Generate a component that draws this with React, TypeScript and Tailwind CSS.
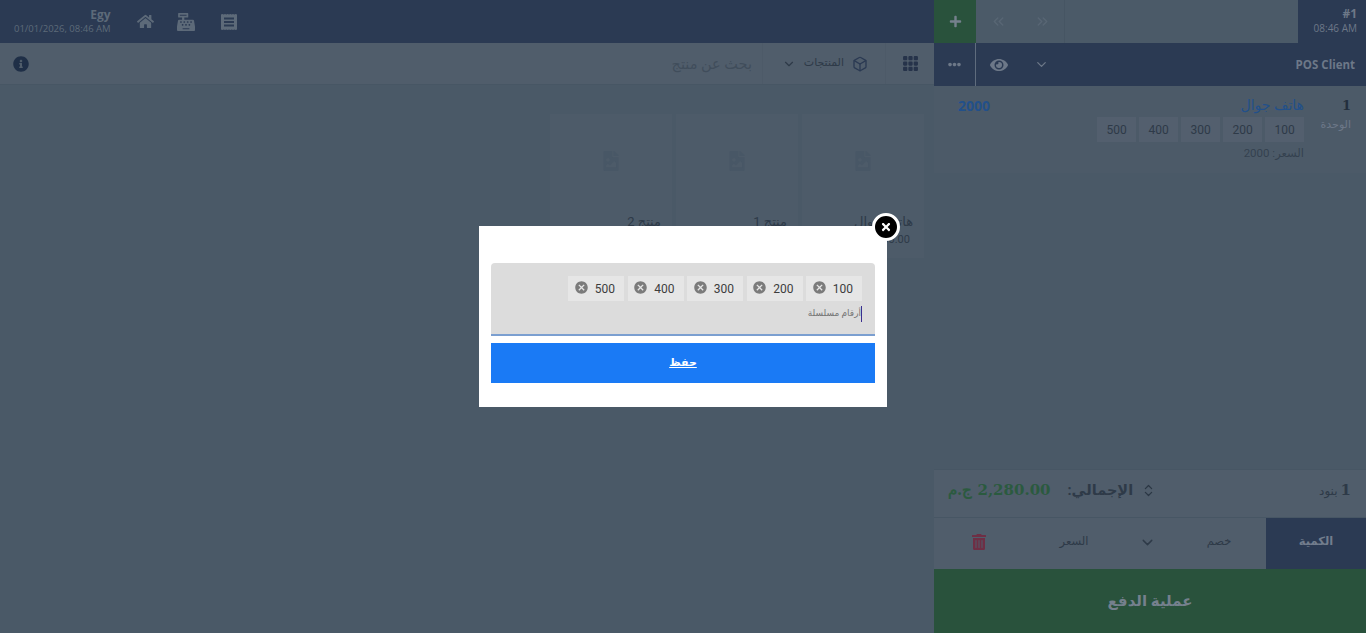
import { FaCashRegister, FaEllipsisH, FaEye, FaFileImage, FaHome, FaInfoCircle, FaPlus, FaTimes, FaTrashAlt } from 'react-icons/fa';
import { BsGrid3X3GapFill } from 'react-icons/bs';
import { FiBox, FiChevronDown } from 'react-icons/fi';
import { LuChevronsLeft, LuChevronsRight, LuChevronsUpDown } from 'react-icons/lu';
import { MdCancel } from 'react-icons/md';

const serials = ['100', '200', '300', '400', '500'];
const products = [
  { name: 'هاتف جوال', price: '2,000.00' },
  { name: 'منتج 1', price: '' },
  { name: 'منتج 2', price: '' },
];

function ReceiptIcon() {
  return (
    <svg width="16" height="16" viewBox="0 0 16 16" fill="currentColor">
      <path d="M0 0.5 L1.3 0 L2.7 0.5 L4 0 L5.3 0.5 L6.7 0 L8 0.5 L9.3 0 L10.7 0.5 L12 0 L13.3 0.5 L14.7 0 L16 0.5 V15.5 L14.7 16 L13.3 15.5 L12 16 L10.7 15.5 L9.3 16 L8 15.5 L6.7 16 L5.3 15.5 L4 16 L2.7 15.5 L1.3 16 L0 15.5 Z" />
      <path fill="#2b3a53" d="M3 3.5 H13 V5.5 H3 Z M3 7 H13 V9 H3 Z M3 10.5 H13 V12.5 H3 Z" />
    </svg>
  );
}

function ProductCard({ name, price }: { name: string; price: string }) {
  return (
    <div className="flex h-[144px] w-[122px] flex-col bg-[#4d5b69] pr-[11px]">
      <div className="flex h-[93px] items-center justify-center pl-[11px] text-[#485766]">
        <FaFileImage size={20} />
      </div>
      <p className="mt-[7px] text-[13px] leading-4 text-[#2e3a48]">{name}</p>
      <p className="mt-[2px] pr-[3px] text-[11px] leading-4 text-[#2e3a48]">{price}</p>
    </div>
  );
}

function Chip({ value }: { value: string }) {
  return (
    <div className="flex h-[25px] w-[56px] items-center gap-[6px] bg-[#e6e6e6] pr-[9px] text-[12px] text-[#3d3d3d]">
      <span>{value}</span>
      <MdCancel size={15} className="-mt-0.5 text-[#7b7b7b]" />
    </div>
  );
}

export default function App() {
  return (
    <div
      dir="rtl"
      className="relative flex h-[633px] w-[1366px] overflow-hidden bg-[#4a5967] font-['Roboto','DejaVu_Sans',sans-serif]"
    >
      {/* السلة */}
      <aside className="flex w-[432px] shrink-0 flex-col">
        <div className="flex h-[43px] shrink-0 bg-[#4b5a68]">
          <div className="flex w-[68px] flex-col items-start justify-start bg-[#2b3a53] pt-[7px] pr-[9px] text-[#6d7888]">
            <span dir="ltr" className="font-['Open_Sans',sans-serif] text-[12px] leading-[14px] font-bold">#1</span>
            <span dir="ltr" className="font-['Open_Sans',sans-serif] text-[10px] leading-[14px]">08:46 AM</span>
          </div>
          <div className="flex-1 border-l border-[#465563]" />
          <div className="flex w-[44px] items-center justify-center text-[#586674]">
            <LuChevronsRight size={17} />
          </div>
          <div className="flex w-[44px] items-center justify-center text-[#586674]">
            <LuChevronsLeft size={17} />
          </div>
          <div className="flex w-[42px] items-center justify-center bg-[#29523c] text-[#75808d]">
            <FaPlus size={13} />
          </div>
        </div>

        <div className="flex h-[43px] shrink-0 items-center bg-[#2b3a53] text-[#6d7888]">
          <span dir="ltr" className="flex-1 pr-[11px] text-right font-['Open_Sans',sans-serif] text-[11.5px] font-bold">
            POS Client
          </span>
          <div className="flex w-[38px] items-center justify-center">
            <FiChevronDown size={15} />
          </div>
          <div className="flex w-[46px] items-center justify-center">
            <FaEye size={18} />
          </div>
          <div className="flex h-full w-[42px] items-center justify-center border-r border-[#5f6c7d]">
            <FaEllipsisH size={13} />
          </div>
        </div>

        <div className="flex h-[87px] shrink-0 gap-[15px] bg-[#4c5a68] pt-[12px] pr-[15px] pl-[24px]">
          <div className="w-[32px] shrink-0">
            <p className="font-['DejaVu_Serif',serif] text-[13px] leading-4 font-bold text-[#232f3d]">1</p>
            <p className="mt-[3px] text-[11px] leading-4 text-[#6d7888]">الوحدة</p>
          </div>
          <div className="flex-1">
            <p className="-mt-[1px] text-[14px] leading-4 text-[#22508a]">هاتف جوال</p>
            <div className="mt-[4px] flex gap-[3px]">
              {serials.map((s) => (
                <span key={s} className="flex h-[25px] w-[39px] items-center justify-center bg-[#535f6e] text-[12px] text-[#2e3a48]">
                  {s}
                </span>
              ))}
            </div>
            <p className="mt-[3px] text-[11.5px] leading-4 text-[#2e3a48]/80">السعر: 2000</p>
          </div>
          <p className="font-['Open_Sans',sans-serif] text-[14px] leading-4 font-bold text-[#22508a]">2000</p>
        </div>

        <div className="flex-1 border-b border-[#475664]" />

        <div className="flex h-[47px] shrink-0 items-center bg-[#505d6b] pr-[15px] pb-[6px] pl-[14px] text-[#2e3a48]">
          <span className="text-[12px]">
            <span className="font-['DejaVu_Serif',serif] text-[15px] font-bold">1</span> بنود
          </span>
          <LuChevronsUpDown size={15} className="mr-auto text-[#2b3744]" />
          <span className="mr-[8px] text-[14.5px] font-bold">الإجمالي:</span>
          <span className="mr-[17px] font-['DejaVu_Serif',serif] text-[15px] font-bold text-[#2b5a3f]">2,280.00 ج.م</span>
        </div>

        <div className="flex h-[52px] shrink-0 border-t border-[#475664] bg-[#505d6b] pb-[3px] text-[11.5px] text-[#2e3a48]">
          <div className="-mb-[3px] flex w-[100px] items-center justify-center bg-[#2b3a53] pb-[3px] font-bold text-[#727d8d]">الكمية</div>
          <div className="flex w-[94px] items-center justify-center">خصم</div>
          <div className="flex w-[50px] items-center justify-center">
            <FiChevronDown size={17} />
          </div>
          <div className="flex w-[96px] items-center justify-center">السعر</div>
          <div className="flex flex-1 items-center justify-start pr-[39px]">
            <FaTrashAlt size={16} className="text-[#6e2f45]" />
          </div>
        </div>

        <div className="flex h-[64px] shrink-0 items-center justify-center bg-[#29523c] text-[15px] font-bold text-[#75808d]">
          عملية الدفع
        </div>
      </aside>

      {/* المنتجات */}
      <main className="flex min-w-0 flex-1 flex-col">
        <header className="flex h-[43px] shrink-0 items-center justify-end bg-[#2b3a53]">
          <div dir="ltr" className="flex items-center pl-[14px] text-[#5d6a79]">
            <div className="text-right font-['Open_Sans',sans-serif]">
              <p className="text-[12px] leading-[14px] font-bold">Egy</p>
              <p className="text-[9.5px] leading-[13px]">01/01/2026, 08:46 AM</p>
            </div>
            <div className="ml-[26px] flex items-center">
              <FaHome size={17} />
              <FaCashRegister size={18} className="ml-[23px]" />
              <span className="ml-[26px]">
                <ReceiptIcon />
              </span>
            </div>
          </div>
        </header>

        <div className="flex h-[42px] shrink-0 items-center border-b border-[#475664] bg-[#505d6b]">
          <div className="flex h-full w-[49px] items-center justify-center border-l border-[#4d5a68] text-[#26334a]">
            <BsGrid3X3GapFill size={17} />
          </div>
          <div className="flex h-full w-[123px] items-center gap-[8px] border-l border-[#4d5a68] pr-[17px] text-[#2e3a48]">
            <FiBox size={16} className="text-[#2b3a53]" />
            <span className="text-[11px]">المنتجات</span>
            <FiChevronDown size={14} />
          </div>
          <span className="pt-[3px] pr-[10px] text-[14.5px] text-[#404d5b]">بحث عن منتج</span>
          <FaInfoCircle size={16} className="mr-auto ml-[13px] text-[#1f2f47]" />
        </div>

        <div className="flex gap-[4px] pt-[29px] pr-[10px]">
          {products.map((p) => (
            <ProductCard key={p.name} name={p.name} price={p.price} />
          ))}
        </div>
      </main>

      {/* نافذة الأرقام المسلسلة */}
      <div className="absolute top-[226px] left-[479px] flex h-[181px] w-[408px] flex-col bg-white px-[12px] pt-[37px]">
        <button className="absolute -top-[13px] -right-[13px] flex h-[28px] w-[28px] items-center justify-center rounded-full border-[3px] border-white bg-black text-white">
          <FaTimes size={12} />
        </button>
        <div className="h-[73px] rounded-t-sm border-b-2 border-[#7b9fd0] bg-[#dcdcdc] pt-[13px] pr-[13px]">
          <div className="flex gap-[3.5px]">
            {serials.map((s) => (
              <Chip key={s} value={s} />
            ))}
          </div>
          <div className="mt-[5px] flex items-center">
            <span className="h-[16px] w-px bg-[#3b2f8f]" />
            <span className="text-[9px] text-[#757575]">أرقام مسلسلة</span>
          </div>
        </div>
        <button className="mt-[7px] h-[40px] bg-[#1a7af5] text-[11px] font-bold text-white underline">حفظ</button>
      </div>
    </div>
  );
}
